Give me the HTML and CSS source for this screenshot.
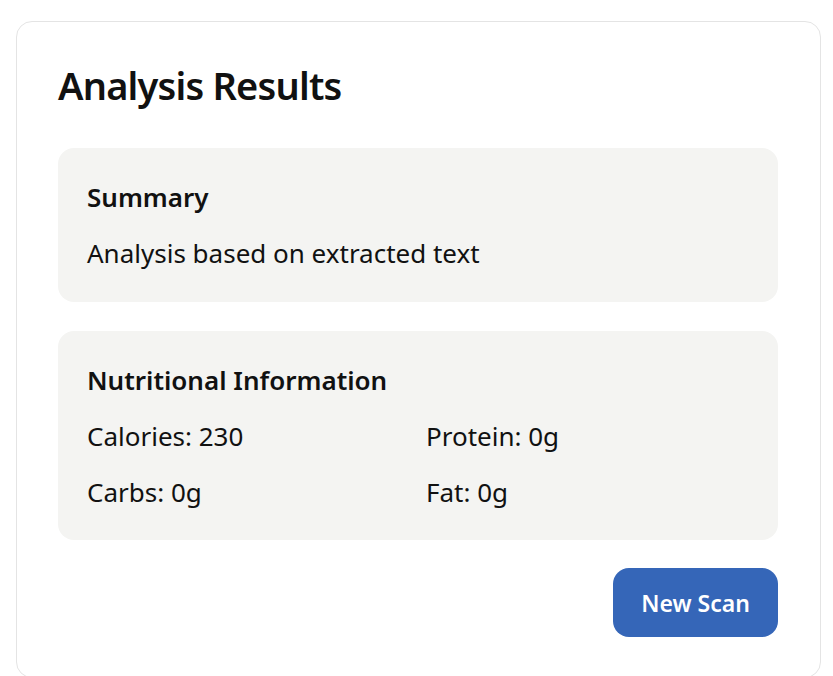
FILE: index.html
```html
<!DOCTYPE html>
<html lang="en">
<head>
<meta charset="utf-8">
<title>Analysis Results</title>
<link rel="stylesheet" href="styles.css">
</head>
<body>
<div class="card">
  <h2 class="title">Analysis Results</h2>
  <section class="panel">
    <h3 class="panel-title">Summary</h3>
    <p class="panel-text">Analysis based on extracted text</p>
  </section>
  <section class="panel">
    <h3 class="panel-title">Nutritional Information</h3>
    <div class="nutri-grid">
      <div class="nutri-item">Calories: 230</div>
      <div class="nutri-item">Protein: 0g</div>
      <div class="nutri-item">Carbs: 0g</div>
      <div class="nutri-item">Fat: 0g</div>
    </div>
  </section>
  <div class="actions">
    <button class="btn-primary" type="button">New Scan</button>
  </div>
</div>
</body>
</html>
```

FILE: styles.css
```css
* { box-sizing: border-box; }
html, body { background: #ffffff; }
body {
  margin: 0;
  padding: 21px 12px 0 16px;
  font-family: "Noto Sans", "Open Sans", sans-serif;
  color: #111111;
}
.card {
  background: #ffffff;
  border: 1px solid #e4e4e4;
  border-radius: 16px;
  padding: 39px 42px 38px 41px;
  min-height: 657px;
}
.title {
  margin: 0 0 38px 0;
  font-size: 38px;
  font-weight: 600;
  line-height: 1.3;
  letter-spacing: -0.8px;
}
.panel {
  background: #f4f4f2;
  border-radius: 16px;
  padding: 33px 29px 31px;
  margin-bottom: 29px;
}
.panel-title {
  margin: 0 0 22px 0;
  font-size: 26px;
  font-weight: 600;
  line-height: 1.3;
}
.panel-text {
  margin: 0;
  font-size: 26px;
  line-height: 1.3;
}
.nutri-grid {
  display: grid;
  grid-template-columns: 1fr 1fr;
  column-gap: 16px;
  row-gap: 22px;
}
.nutri-item {
  font-size: 26px;
  line-height: 1.3;
}
.actions {
  display: flex;
  justify-content: flex-end;
  margin-top: -1px;
}
.btn-primary {
  width: 165px;
  height: 69px;
  border: none;
  border-radius: 16px;
  background: #3566b8;
  color: #ffffff;
  font-family: inherit;
  font-size: 23px;
  font-weight: 600;
}
```
